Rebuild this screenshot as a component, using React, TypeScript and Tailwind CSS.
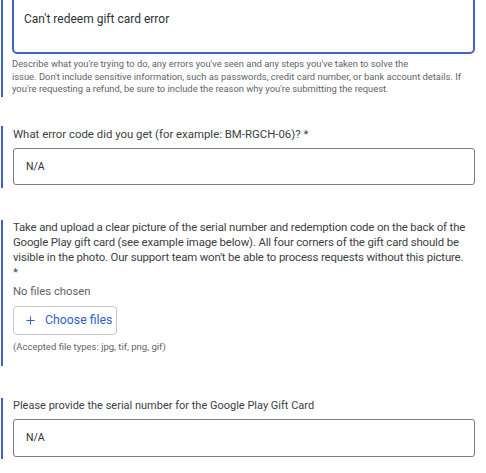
import { Plus } from "lucide-react";

const font = { fontFamily: "Roboto, 'Noto Sans', Arial, sans-serif" };

export default function App() {
  return (
    <div className="w-[486px] h-[473px] overflow-hidden bg-white text-[#202124] pr-[11px]" style={font}>
      {/* description */}
      <div className="ml-[1px] border-l-2 border-[#4062c4] pl-[9px] h-[101px]">
        <div className="-mt-[4px] h-[58px] rounded-[5px] border-2 border-[#3f63cb] px-[10px] pt-[13px] text-[12px] leading-[16px] text-[#303134]">
          Can't redeem gift card error
        </div>
        <p className="mt-[4px] whitespace-nowrap text-[9.4px] leading-[12.5px] text-[#5f6368]">
          Describe what you're trying to do, any errors you've seen and any steps you've taken to solve the
          <br />
          issue. Don't include sensitive information, such as passwords, credit card number, or bank account details. If
          <br />
          you're requesting a refund, be sure to include the reason why you're submitting the request.
        </p>
      </div>

      {/* error code */}
      <div className="mt-[29px] ml-[1px] border-l-2 border-[#4062c4] pl-[10px] h-[62px]">
        <label className="block text-[11.4px] leading-[16px] text-[#3c4043]">
          What error code did you get (for example: BM-RGCH-06)? *
        </label>
        <div className="mt-[6px] h-[37px] rounded-[3px] border border-[#7d7d7d] px-[12px] flex items-center text-[10.5px] text-[#303134]">
          N/A
        </div>
      </div>

      {/* upload */}
      <div className="mt-[32px] ml-[1px] border-l-2 border-[#4062c4] pl-[10px] h-[146px]">
        <p className="whitespace-nowrap text-[11.4px] tracking-[-0.15px] leading-[15px] text-[#3c4043]">
          Take and upload a clear picture of the serial number and redemption code on the back of the
          <br />
          Google Play gift card (see example image below). All four corners of the gift card should be
          <br />
          visible in the photo. Our support team won't be able to process requests without this picture.
          <br />*
        </p>
        <div className="mt-[4px] text-[11.3px] leading-[16px] text-[#5f6368]">No files chosen</div>
        <button className="mt-[6px] h-[29px] w-[104px] rounded-[4px] border border-[#c6c6c6] flex items-center gap-[8px] pl-[10px] text-[12.3px] text-[#2e5fc8]">
          <Plus size={13} strokeWidth={1.8} />
          Choose files
        </button>
        <div className="mt-[6px] text-[9.5px] leading-[12px] text-[#5f6368]">(Accepted file types: jpg, tif, png, gif)</div>
      </div>

      {/* serial */}
      <div className="mt-[32px] ml-[1px] border-l-2 border-[#4062c4] pl-[10px] h-[61px]">
        <label className="block text-[11px] leading-[16px] text-[#3c4043]">
          Please provide the serial number for the Google Play Gift Card
        </label>
        <div className="mt-[5px] h-[38px] rounded-[3px] border border-[#7d7d7d] px-[12px] flex items-center text-[10.5px] text-[#303134]">
          N/A
        </div>
      </div>
    </div>
  );
}
